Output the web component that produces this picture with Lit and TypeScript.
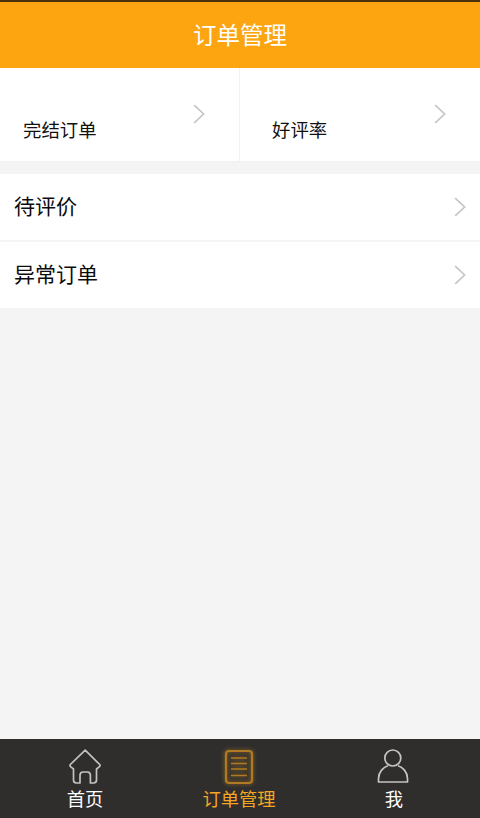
import { LitElement, html, css, svg } from "lit";
import { customElement } from "lit/decorators.js";

const chevron = () => html`<svg class="chev" viewBox="0 0 12 20" fill="none"><path d="M1.200 1.200 10.600 10 1.200 18.800" stroke="#c6c6c6" stroke-width="1.700"/></svg>`;

@customElement("app-root")
export class AppRoot extends LitElement {
  static styles = css`
    :host { display: flex; flex-direction: column; width: 480px; height: 818px; background: #f4f4f4; overflow: hidden;
      font-family: "Noto Sans CJK SC", "Noto Sans", sans-serif; }
    .status { height: 2px; background: #4a300c; flex: none; }
    .header { height: 66px; flex: none; background: #fca510; color: #fff; display: flex; align-items: center; justify-content: center; font-size: 23.5px; line-height: 1; }
    .stats { height: 93px; flex: none; display: grid; grid-template-columns: 240px 240px; background: #fff; border-bottom: 1px solid #f0f0f0; }
    .stat { display: flex; align-items: flex-start; justify-content: space-between; color: #111; font-size: 18.4px; line-height: 26px; }
    .stat.a { border-right: 1px solid #f2f2f2; padding: 48px 34px 0 23px; }
    .stat.b { padding: 48px 34px 0 32px; }
    .chev { width: 12px; height: 20px; flex: none; }
    .stat .chev { margin-top: -12px; }
    .list { margin-top: 12px; background: #fff; flex: none; }
    .row { height: 66px; display: flex; align-items: center; justify-content: space-between; padding: 0 14px; font-size: 21px; color: #0c0c0c; }
    .row + .row { border-top: 2px solid #f5f5f5; }
    .row .text { margin-top: -4px; }
    .spacer { flex: 1; }
    .tabs { height: 79px; flex: none; background: #2f2e2d; display: grid; grid-template-columns: 170px 138px 172px; }
    .tab { display: flex; flex-direction: column; align-items: center; padding-top: 10px; color: #fff; font-size: 18.300px; line-height: 22px; }
    .tab svg { width: 36px; height: 36px; display: block; margin-bottom: 2px; }
    .tab.on { color: #f5a623; }
    .tab.on svg { filter: drop-shadow(0 0 2px rgba(245,166,35,.55)); }
  `;

  render() {
    return html`
      <div class="status"></div>
      <div class="header">订单管理</div>
      <div class="stats">
        <div class="stat a"><span>完结订单</span>${chevron()}</div>
        <div class="stat b"><span>好评率</span>${chevron()}</div>
      </div>
      <div class="list">
        <div class="row"><span class="text">待评价</span>${chevron()}</div>
        <div class="row"><span class="text">异常订单</span>${chevron()}</div>
      </div>
      <div class="spacer"></div>
      <div class="tabs">
        <div class="tab">
          <svg viewBox="0 0 36 36" fill="none" stroke="#c2c2c2" stroke-width="1.700" stroke-linejoin="round">
            ${svg`<path d="M18.200 1.200 3.300 15.500c-.7.900-.3 1.800.5 2.400l2.700 2.100v11c0 2 1 3 3 3H13v-7.500c0-2.500 1-3.500 3-3.500h4.400c2 0 3 1 3 3.500v7.500h3.100c2 0 3-1 3-3v-11l2.700-2.100c.8-.6 1.200-1.500.5-2.400z"/>`}
          </svg>
          <span>首页</span>
        </div>
        <div class="tab on">
          <svg viewBox="0 0 36 36" fill="none" stroke="#b07a20">
            ${svg`<rect x="5" y="2" width="26" height="32" rx="3" stroke-width="2.200"/>
            <path d="M10 9h16M10 14.500h16M10 20h16M10 26.500h16" stroke-width="1.600"/>`}
          </svg>
          <span>订单管理</span>
        </div>
        <div class="tab">
          <svg viewBox="0 0 36 36" fill="none" stroke="#c4c4c4" stroke-width="1.700">
            ${svg`<circle cx="16.800" cy="9" r="8"/>
            <path d="M2.500 33v-3.500c0-6.500 5-11.500 9.500-12.800M31.500 33v-3.500c0-6.500-5-11.500-9.500-12.800M1.800 33h30.400"/>`}
          </svg>
          <span>我</span>
        </div>
      </div>
    `;
  }
}
